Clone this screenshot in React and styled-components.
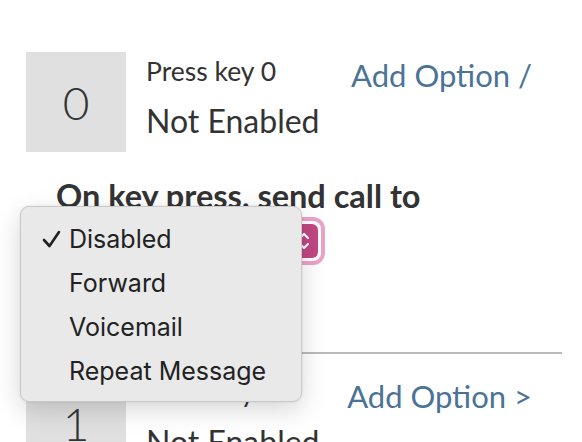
import styled, { createGlobalStyle } from "styled-components"

const GlobalStyle = createGlobalStyle`
  html, body {
    margin: 0;
    padding: 0;
    background: #ffffff;
  }
  body {
    font-family: "Lato", "Open Sans", sans-serif;
    color: #333333;
    overflow: hidden;
  }
`

const Page = styled.div`
  position: relative;
  width: 582px;
  height: 442px;
  overflow: hidden;
  padding: 52px 20px 0 26px;
  box-sizing: border-box;
`

const OptionRow = styled.div`
  display: flex;
  align-items: flex-start;
`

const KeyBox = styled.div`
  width: 100px;
  height: 100px;
  flex: none;
  display: flex;
  align-items: center;
  justify-content: center;
  background: #e0e0e0;
  font-size: 46px;
  font-weight: 300;
  color: #333;
`

const Info = styled.div`
  display: flex;
  flex-direction: column;
  margin-left: 20px;
  padding-top: 4px;
`

const KeyLabel = styled.span`
  font-size: 26.5px;
  line-height: 30px;
`

const Status = styled.span`
  font-size: 32px;
  line-height: 44px;
  margin-top: 13px;
`

const AddLink = styled.a`
  margin-left: auto;
  margin-right: 30px;
  margin-top: 5px;
  font-size: 31px;
  line-height: 36px;
  color: #4a7397;
  text-decoration: none;
  cursor: pointer;
`

const Action = styled.div`
  padding: 28px 0 0 30px;
  height: 200px;
  box-sizing: border-box;
`

const Heading = styled.div`
  font-size: 32.5px;
  font-weight: 700;
  line-height: 32px;
  color: #333;
`

const SelectBox = styled.div`
  margin-top: 10px;
  width: 264px;
  height: 38px;
  display: flex;
  justify-content: flex-end;
  align-items: center;
  background: #fff;
  border-radius: 7px;
  box-shadow: 0 0 0 1px #ffffff, 0 0 0 5px #eba3c7;
`

const ArrowButton = styled.div`
  width: 28px;
  height: 34px;
  margin-right: 2px;
  border-radius: 6px;
  background: #c14883;
  display: flex;
  align-items: center;
  justify-content: center;
`

const Divider = styled.hr`
  margin: 0 0 19px 0;
  border: none;
  border-top: 2px solid #bbbbbb;
`

const Menu = styled.div`
  position: absolute;
  left: 20px;
  top: 206px;
  width: 282px;
  height: 196px;
  box-sizing: border-box;
  padding-top: 10px;
  background: #e9e9e9;
  border: 1px solid #c9c9c9;
  border-radius: 9px;
  box-shadow: 0 8px 26px rgba(0, 0, 0, 0.16), 0 0 3px rgba(0, 0, 0, 0.08);
  font-family: "Inter", "Liberation Sans", sans-serif;
`

const MenuItem = styled.div`
  position: relative;
  height: 44px;
  line-height: 44px;
  padding-left: 48px;
  font-size: 25px;
  color: #222;
`

const Check = styled.svg`
  position: absolute;
  left: 21px;
  top: 13px;
`

const Chevrons = () => (
  <svg width="12" height="20" viewBox="0 0 12 20">
    <path d="M2 7 L6 3 L10 7 M2 13 L6 17 L10 13" fill="none" stroke="#fff" strokeWidth="2.2" strokeLinecap="round" strokeLinejoin="round" />
  </svg>
)

const options = [
  { key: 0, link: "Add Option /" },
  { key: 1, link: "Add Option >" },
]

const menuItems = ["Disabled", "Forward", "Voicemail", "Repeat Message"]

export default function App() {
  return (
    <>
      <GlobalStyle />
      <Page>
        {options.map((o, i) => (
          <div key={o.key}>
            <OptionRow>
              <KeyBox>{o.key}</KeyBox>
              <Info>
                <KeyLabel>Press key {o.key}</KeyLabel>
                <Status>Not Enabled</Status>
              </Info>
              <AddLink>{o.link}</AddLink>
            </OptionRow>
            {i === 0 && (
              <>
                <Action>
                  <Heading>On key press, send call to</Heading>
                  <SelectBox>
                    <ArrowButton>
                      <Chevrons />
                    </ArrowButton>
                  </SelectBox>
                </Action>
                <Divider />
              </>
            )}
          </div>
        ))}
        <Menu>
          {menuItems.map((m, i) => (
            <MenuItem key={m}>
              {i === 0 && (
                <Check width="19" height="18" viewBox="0 0 19 18">
                  <path d="M2 10 L7.5 16 L17 2" fill="none" stroke="#222" strokeWidth="2.6" strokeLinecap="round" strokeLinejoin="round" />
                </Check>
              )}
              {m}
            </MenuItem>
          ))}
        </Menu>
      </Page>
    </>
  )
}
